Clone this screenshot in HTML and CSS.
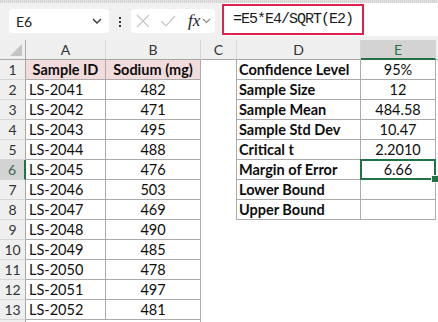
FILE: index.html
```html
<!DOCTYPE html>
<html>
<head>
    <title>Confidence Interval</title>
    <link rel="stylesheet" href="styles.css">
</head>
<body>
    <div class="top-strip"></div>
    <div class="formula-bar">
        <div class="name-box">
            <span>E6</span>
            <svg class="chev" width="10" height="6" viewBox="0 0 10 6"><path d="M1 1 L5 5 L9 1" fill="none" stroke="#333" stroke-width="1.3"/></svg>
        </div>
        <div class="dots">
            <span></span><span></span><span></span>
        </div>
        <div class="func-box">
            <svg width="14" height="14" viewBox="0 0 14 14"><path d="M1 1 L13 13 M13 1 L1 13" stroke="#c6c6c6" stroke-width="1.2"/></svg>
            <svg width="16" height="14" viewBox="0 0 16 14"><path d="M1 7 L6 12 L15 2" fill="none" stroke="#c6c6c6" stroke-width="1.2"/></svg>
            <span class="fx">fx</span>
            <svg class="chev" width="9" height="6" viewBox="0 0 9 6"><path d="M1 1 L4.5 4.5 L8 1" fill="none" stroke="#888" stroke-width="1.1"/></svg>
        </div>
        <div class="formula-input">
            <span class="formula">=E5*E4/SQRT(E2)</span>
        </div>
    </div>

    <div class="sheet">
        <!-- column headers -->
        <div class="hd corner"><svg width="12" height="12" viewBox="0 0 12 12"><path d="M12 0 L12 12 L0 12 Z" fill="#c4c4c4"/></svg></div>
        <div class="hd">A</div>
        <div class="hd">B</div>
        <div class="hd">C</div>
        <div class="hd">D</div>
        <div class="hd active-col">E</div>
        <div class="hd last"></div>

        <div class="rh">1</div>
        <div class="cell box head">Sample ID</div>
        <div class="cell box head">Sodium (mg)</div>
        <div class="cell edge"></div>
        <div class="cell box label">Confidence Level</div>
        <div class="cell box num">95%</div>
        <div class="cell"></div>

        <div class="rh">2</div>
        <div class="cell box">LS-2041</div>
        <div class="cell box num">482</div>
        <div class="cell edge"></div>
        <div class="cell box label">Sample Size</div>
        <div class="cell box num">12</div>
        <div class="cell"></div>

        <div class="rh">3</div>
        <div class="cell box">LS-2042</div>
        <div class="cell box num">471</div>
        <div class="cell edge"></div>
        <div class="cell box label">Sample Mean</div>
        <div class="cell box num">484.58</div>
        <div class="cell"></div>

        <div class="rh">4</div>
        <div class="cell box">LS-2043</div>
        <div class="cell box num">495</div>
        <div class="cell edge"></div>
        <div class="cell box label">Sample Std Dev</div>
        <div class="cell box num">10.47</div>
        <div class="cell"></div>

        <div class="rh">5</div>
        <div class="cell box">LS-2044</div>
        <div class="cell box num">488</div>
        <div class="cell edge"></div>
        <div class="cell box label">Critical t</div>
        <div class="cell box num">2.2010</div>
        <div class="cell"></div>

        <div class="rh active-row">6</div>
        <div class="cell box">LS-2045</div>
        <div class="cell box num">476</div>
        <div class="cell edge"></div>
        <div class="cell box label">Margin of Error</div>
        <div class="cell box num selected">6.66<span class="handle"></span></div>
        <div class="cell"></div>

        <div class="rh">7</div>
        <div class="cell box">LS-2046</div>
        <div class="cell box num">503</div>
        <div class="cell edge"></div>
        <div class="cell box label">Lower Bound</div>
        <div class="cell box num"></div>
        <div class="cell"></div>

        <div class="rh">8</div>
        <div class="cell box">LS-2047</div>
        <div class="cell box num">469</div>
        <div class="cell edge"></div>
        <div class="cell box label">Upper Bound</div>
        <div class="cell box num"></div>
        <div class="cell"></div>

        <div class="rh">9</div>
        <div class="cell box">LS-2048</div>
        <div class="cell box num">490</div>
        <div class="cell"></div><div class="cell"></div><div class="cell"></div><div class="cell"></div>

        <div class="rh">10</div>
        <div class="cell box">LS-2049</div>
        <div class="cell box num">485</div>
        <div class="cell"></div><div class="cell"></div><div class="cell"></div><div class="cell"></div>

        <div class="rh">11</div>
        <div class="cell box">LS-2050</div>
        <div class="cell box num">478</div>
        <div class="cell"></div><div class="cell"></div><div class="cell"></div><div class="cell"></div>

        <div class="rh">12</div>
        <div class="cell box">LS-2051</div>
        <div class="cell box num">497</div>
        <div class="cell"></div><div class="cell"></div><div class="cell"></div><div class="cell"></div>

        <div class="rh">13</div>
        <div class="cell box">LS-2052</div>
        <div class="cell box num">481</div>
        <div class="cell"></div><div class="cell"></div><div class="cell"></div><div class="cell"></div>

        <div class="rh"></div>
        <div class="cell"></div>
        <div class="cell edge"></div>
        <div class="cell"></div><div class="cell"></div><div class="cell"></div><div class="cell"></div>
    </div>
</body>
</html>
```

FILE: styles.css
```css
:root {
    --chrome-bg: #f0f0f0;
    --header-bg: #efefef;
    --header-active: #d3d3d3;
    --header-line: #d6d6d6;
    --header-edge: #a8a8a8;
    --cell-line: #ababab;
    --green: #217346;
    --text: #0d0d0d;
}

body {
    margin: 0;
    width: 438px;
    height: 322px;
    overflow: hidden;
    background: #fff;
    font-family: Lato, 'Open Sans', sans-serif;
    color: var(--text);
}

.top-strip {
    height: 3px;
    background: repeating-linear-gradient(90deg, #d4d4d4 0 1px, #e2e2e2 1px 2px);
}

/* formula bar */
.formula-bar {
    height: 37px;
    background: var(--chrome-bg);
    display: flex;
    align-items: flex-start;
    padding-left: 9px;
    box-sizing: border-box;
}

.name-box {
    margin-top: 6px;
    width: 100px;
    height: 24px;
    background: #fff;
    border-radius: 4px;
    display: flex;
    align-items: center;
    justify-content: space-between;
    padding: 0 7px 0 7px;
    box-sizing: border-box;
    font-size: 14px;
    color: #222;
}

.dots {
    margin: 14px 0 0 0;
    width: 22px;
    display: flex;
    flex-direction: column;
    align-items: center;
    gap: 2px;
}

.dots span {
    width: 2px;
    height: 2px;
    background: #333;
}

.func-box {
    margin-top: 6px;
    width: 84px;
    height: 24px;
    background: #fff;
    border-radius: 4px;
    display: flex;
    align-items: center;
    padding-left: 5px;
    gap: 10px;
    box-sizing: border-box;
}

.fx {
    font-family: 'Liberation Serif', serif;
    font-style: italic;
    font-size: 17px;
    color: #222;
    margin-left: 2px;
    margin-right: -8px;
}

.formula-input {
    margin: 0 0 0 6px;
    flex: 1;
    height: 33px;
    background: #fff;
    padding: 1px 0 0 1px;
    box-sizing: border-box;
}

.formula {
    display: inline-block;
    height: 31px;
    line-height: 27px;
    padding: 0 9px 0 9px;
    border: 2px solid #e0204e;
    box-sizing: border-box;
    font-family: 'Liberation Mono', monospace;
    font-size: 15px;
    letter-spacing: -1px;
    color: #1a1a1a;
}

/* sheet */
.sheet {
    display: grid;
    grid-template-columns: 26px 80px 95px 36px 124px 75px 1fr;
    grid-auto-rows: 20px;
}

.hd {
    background: var(--header-bg);
    border-right: 1px solid var(--header-line);
    border-bottom: 1px solid var(--header-edge);
    display: flex;
    align-items: center;
    justify-content: center;
    font-size: 14px;
    color: #333;
    box-sizing: border-box;
}

.hd.corner {
    border-right-color: var(--header-edge);
    justify-content: flex-end;
    align-items: flex-end;
    padding: 0 3px 3px 0;
}

.hd.last {
    border-right: none;
}

.hd.active-col {
    background: var(--header-active);
    color: var(--green);
    border-bottom: 2px solid var(--green);
}

.rh {
    background: var(--header-bg);
    border-right: 1px solid var(--header-edge);
    border-bottom: 1px solid var(--header-line);
    display: flex;
    align-items: center;
    justify-content: center;
    font-size: 14px;
    color: #333;
    box-sizing: border-box;
}

.rh.active-row {
    background: var(--header-active);
    color: #3d6b4f;
    border-right: 2px solid var(--green);
}

.cell {
    box-sizing: border-box;
    font-size: 14.5px;
    display: flex;
    align-items: center;
    padding-left: 3px;
    white-space: nowrap;
    position: relative;
}

.cell.box {
    border-right: 1px solid var(--cell-line);
    border-bottom: 1px solid var(--cell-line);
}

.cell.edge {
    border-right: 1px solid var(--cell-line);
}

.cell.head {
    background: #f2dcdb;
    font-weight: 700;
    justify-content: center;
    padding-left: 0;
}

.cell.num {
    justify-content: center;
    padding-left: 0;
}

.cell.label {
    font-weight: 700;
    padding-left: 2px;
}

.cell.selected::after {
    content: "";
    position: absolute;
    left: -1px;
    top: -1px;
    right: -1px;
    bottom: -1px;
    border: 2px solid var(--green);
}

.handle {
    position: absolute;
    right: -4px;
    bottom: -4px;
    width: 6px;
    height: 6px;
    background: var(--green);
    border: 1px solid #fff;
    z-index: 1;
}
```
